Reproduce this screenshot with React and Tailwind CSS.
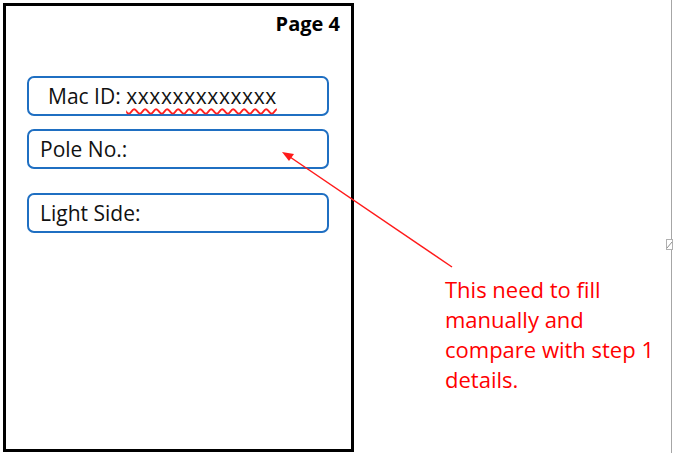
import React from "react";

const fields = [
  { label: "Mac ID:", value: "xxxxxxxxxxxxx", indent: "pl-[19px]" },
  { label: "Pole No.:", indent: "pl-[11px]" },
  { label: "Light Side:", indent: "pl-[11px]" },
];

export default function App() {
  return (
    <div className="relative w-[673px] h-[453px] bg-white overflow-hidden font-['Open_Sans',sans-serif]">
      <div className="flex w-[672px] h-[453px] border-r border-[#a6a6a6]">
        {/* page frame */}
        <div className="shrink-0 mt-[3px] ml-[3px] w-[351px] h-[449px] border-[3px] border-black flex flex-col">
          <div className="flex justify-end pr-[11px] pt-[6px]">
            <span className="text-[20px] font-bold leading-[24px] text-black">Page 4</span>
          </div>
          <div className="flex flex-col pl-[21px] pt-[40px]">
            {fields.map((f, i) => (
              <div
                key={f.label}
                className={`w-[302px] h-[40px] border-2 border-[#1f6fc2] rounded-[7px] flex items-center ${f.indent} ${
                  i === 0 ? "" : i === 1 ? "mt-[13px]" : "mt-[24px]"
                }`}
              >
                <span className="text-[21px] leading-none text-[#111]">
                  {f.label}
                  {f.value && (
                    <>
                      {" "}
                      <span className="tracking-[0.6px] underline decoration-wavy decoration-[#ff2020] decoration-[1.5px] underline-offset-[4px]">
                        {f.value}
                      </span>
                    </>
                  )}
                </span>
              </div>
            ))}
          </div>
        </div>

        {/* note */}
        <div className="pl-[91px] pt-[274px]">
          <p className="text-[22px] leading-[30px] text-[#ff0000] whitespace-nowrap">
            This need to fill
            <br />
            manually and
            <br />
            compare with step 1
            <br />
            details.
          </p>
        </div>
      </div>

      {/* arrow */}
      <svg className="absolute left-0 top-0 pointer-events-none" width="673" height="453">
        <line x1="452" y1="267" x2="290" y2="157" stroke="#ff1a1a" strokeWidth="1.5" />
        <polygon points="282,152 294,154 289,161" fill="#ff1a1a" />
      </svg>

      {/* resize handle on the page edge */}
      <svg className="absolute left-[664px] top-[239px]" width="9" height="11">
        <rect x="2.5" y="0.5" width="6" height="10" fill="#fff" stroke="#b0b0b0" />
        <line x1="3" y1="9" x2="8" y2="3" stroke="#909090" />
      </svg>
    </div>
  );
}
